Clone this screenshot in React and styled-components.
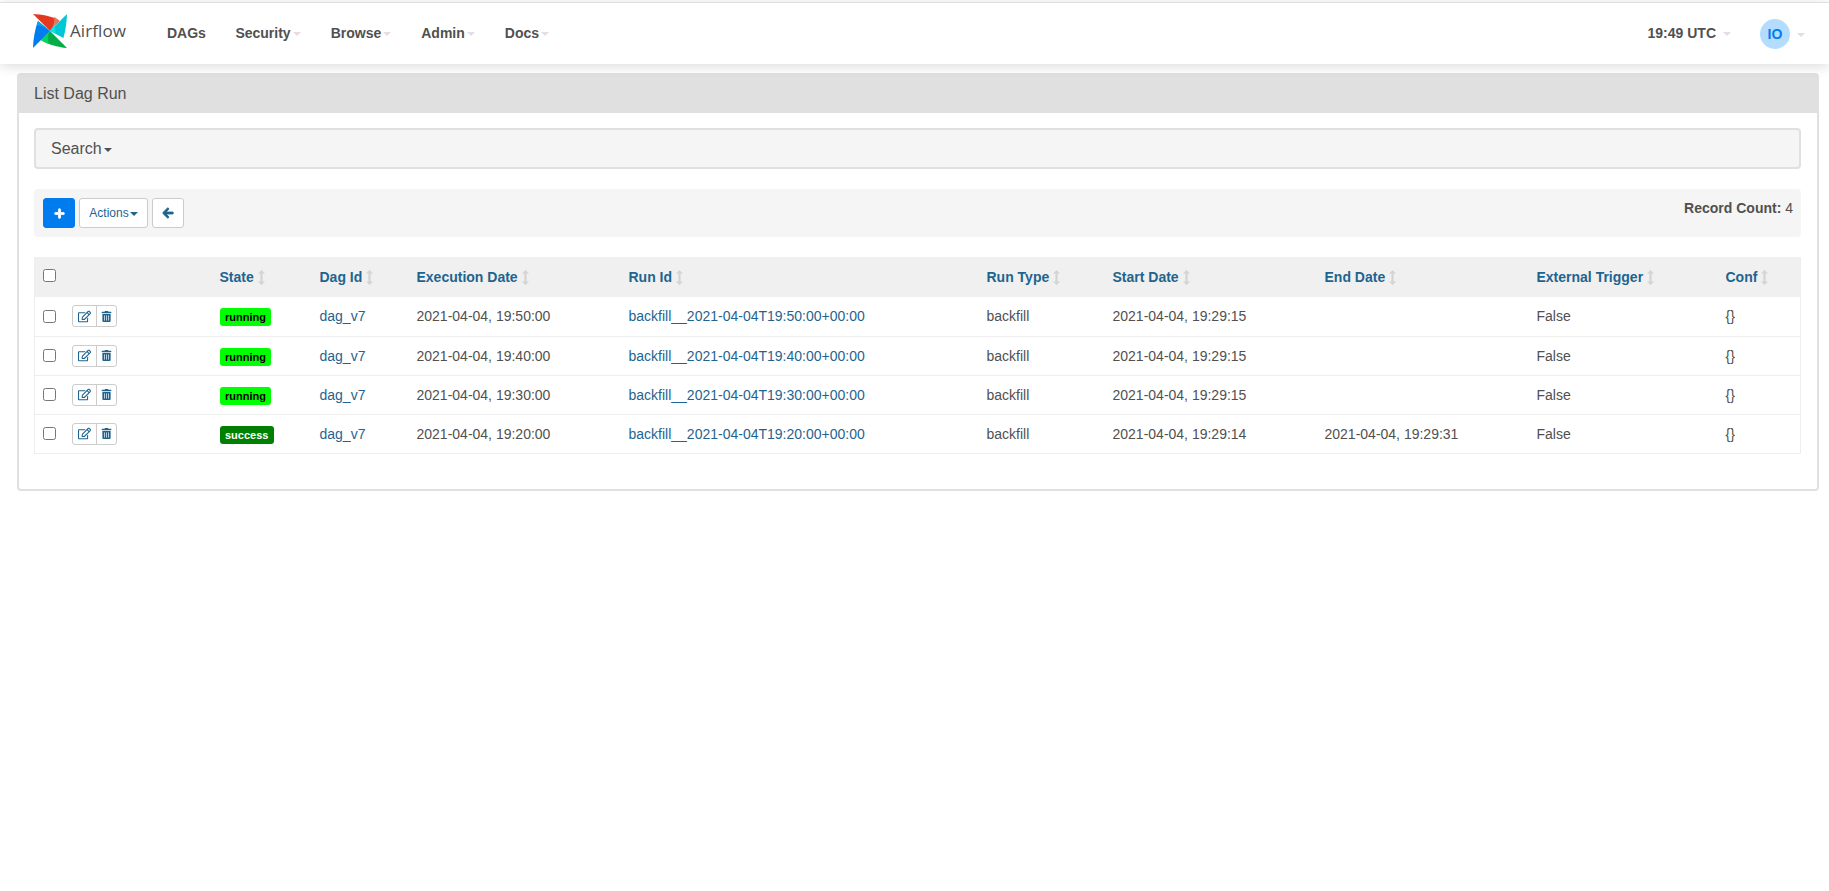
import React from "react";
import styled, { createGlobalStyle } from "styled-components";
import { FaPlus, FaArrowLeft, FaRegEdit, FaTrashAlt } from "react-icons/fa";

const LINK = "#1f648f";

const Global = createGlobalStyle`
  html, body { margin: 0; padding: 0; background: #fff; }
  body { font-family: "Liberation Sans", Arial, sans-serif; font-size: 14px; line-height: 20px; color: #51504f; }
  * { box-sizing: border-box; }
`;

const Navbar = styled.header`
  height: 62px;
  margin-top: 2px;
  border-top: 1px solid #e0e0e0;
  background: #fff;
  box-shadow: 0 2px 12px rgba(0, 0, 0, 0.15);
  display: flex;
  align-items: center;
  padding: 0 24px 0 32px;
  position: relative;
`;
const Brand = styled.a`
  display: flex;
  align-items: center;
  width: 135px;
  color: #51504f;
  font-family: "Open Sans", sans-serif;
  font-size: 17px;
  margin-top: -6px;
`;
const BrandName = styled.span`
  margin-left: 2px;
  letter-spacing: 0.1px;
`;
const Menu = styled.nav`
  display: flex;
  align-items: center;
  flex: 1;
  margin-top: -2px;
`;
const MenuItem = styled.a`
  display: flex;
  align-items: center;
  font-weight: 700;
  padding-right: ${(p) => (p.$caret ? "30px" : "29.5px")};
`;
const Caret = styled.span`
  display: inline-block;
  width: 0;
  height: 0;
  margin-left: ${(p) => p.$gap || 2}px;
  margin-top: 2px;
  border-top: 4px solid ${(p) => p.$color || "#e8dbe8"};
  border-left: 4px solid transparent;
  border-right: 4px solid transparent;
`;
const Clock = styled.span`
  display: flex;
  align-items: center;
  font-weight: 700;
  margin-right: 29px;
  margin-top: -2px;
`;
const Avatar = styled.span`
  width: 30px;
  height: 30px;
  border-radius: 50%;
  background: #b3dcff;
  color: #017cee;
  font-weight: 700;
  display: flex;
  align-items: center;
  justify-content: center;
`;
const UserMenu = styled.span`
  display: flex;
  align-items: center;
`;

const Page = styled.main`
  margin: 9px 10px 0 17px;
`;
const Panel = styled.section`
  border: 2px solid #e0e0e0;
  border-radius: 4px;
  background: #fff;
`;
const PanelHeading = styled.h1`
  margin: 0;
  height: 38px;
  background: #e0e0e0;
  padding: 9px 15px 0;
  font-size: 16px;
  line-height: 20px;
  font-weight: 400;
`;
const PanelBody = styled.div`
  padding: 15px 16px 35px 15px;
`;
const SearchBar = styled.div`
  height: 41px;
  border: 2px solid #e0e0e0;
  border-radius: 4px;
  background: #f5f5f5;
  padding: 0 15px;
  display: flex;
  align-items: center;
  font-size: 16px;
`;
const Toolbar = styled.div`
  margin-top: 20px;
  height: 48px;
  background: #f5f5f5;
  border-radius: 4px;
  padding: 9px 8px 9px 9px;
  display: flex;
  align-items: flex-start;
  gap: 4px;
`;
const Button = styled.button`
  height: 30px;
  width: ${(p) => p.$w}px;
  padding: 0;
  border-radius: 3px;
  border: 1px solid ${(p) => (p.$primary ? "#017cee" : "#ccc")};
  background: ${(p) => (p.$primary ? "#017cee" : "#fff")};
  color: ${(p) => (p.$primary ? "#fff" : LINK)};
  font: 12px "Liberation Sans", Arial, sans-serif;
  display: flex;
  align-items: center;
  justify-content: center;
  svg { stroke: currentColor; stroke-width: 40; }
`;
const RecordCount = styled.div`
  margin-left: auto;
`;
const Table = styled.table`
  margin-top: 20px;
  width: 100%;
  table-layout: fixed;
  border-collapse: collapse;
  border: 1px solid #eee;
  border-top: 0;
`;
const Th = styled.th`
  height: 40px;
  background: #f0f0f0;
  text-align: left;
  padding: 0 8px;
  color: ${LINK};
  font-weight: 700;
  white-space: nowrap;
`;
const Td = styled.td`
  height: 39px;
  padding: 0 8px;
  border-top: 1px solid #eee;
  white-space: nowrap;
`;
const Row = styled.tr`
  &:first-child td { border-top: 0; }
`;
const Link = styled.a`
  color: ${LINK};
`;
const CheckCell = styled.div`
  display: flex;
  align-items: center;
`;
const Check = styled.input.attrs({ type: "checkbox" })`
  margin: 0;
  width: 13px;
  height: 13px;
`;
const HeadCheck = styled(Check)`
  margin-top: 0;
`;
const IconGroup = styled.div`
  display: flex;
  margin-left: 16px;
  height: 22px;
  width: 45px;
  border: 1px solid #ccc;
  border-radius: 3px;
  color: ${LINK};
`;
const IconBtn = styled.span`
  width: ${(p) => p.$w}px;
  display: flex;
  align-items: center;
  justify-content: center;
  font-size: 13px;
  & + & { border-left: 1px solid #ccc; }
`;
const Label = styled.span`
  display: inline-block;
  height: 18px;
  line-height: 18px;
  padding: 0 5.5px;
  margin-top: 2px;
  border-radius: 3px;
  font-size: 11px;
  font-weight: 700;
  background: ${(p) => p.$bg};
  color: ${(p) => p.$fg};
`;
const SortSvg = styled.svg`
  margin-left: 4px;
  vertical-align: -3px;
`;
const Sort = () => (
  <SortSvg width="7" height="15" viewBox="0 0 7 15" fill="#d4d4d4">
    <path d="M3.5 0 7 3.6H4.6V11.4H7L3.5 15 0 11.4H2.4V3.6H0Z" />
  </SortSvg>
);
const Logo = () => (
  <svg width="36" height="36" viewBox="0 0 36 36">
    <path d="M1 1 L18 18 L27.5 8 C21 3 9 1.5 1 1Z" fill="#e43921" />
    <path d="M18 18 L27.5 8 C26 6 24 5 22 4 C23 9 21 14 18 18Z" fill="#f0705a" />
    <path d="M35 1 L18 18 L31.5 25 C33.5 17 34.8 9 35 1Z" fill="#00c7d4" />
    <path d="M18 18 L24 21 C22 15 23 11 27 6 Z" fill="#11e1ee" />
    <path d="M35 35 L18 18 L9 27 C15 31 26 34.5 35 35Z" fill="#00ad46" />
    <path d="M18 18 L9 27 C11 28.5 14 30 17 31 C15 26 16 22 18 18Z" fill="#04d659" />
    <path d="M1 35 L18 18 L6 8 C3 16 1.2 26 1 35Z" fill="#017cee" />
    <path d="M18 18 L6 8 C5.5 9.5 5 11 4.6 12.5 C9 12 14 14 18 18Z" fill="#00a7e1" />
  </svg>
);

const widths = [177, 100, 97, 212, 358, 126, 212, 212, 189, 0];
const heads = ["State", "Dag Id", "Execution Date", "Run Id", "Run Type", "Start Date", "End Date", "External Trigger", "Conf"];
const Col = styled.col`
  width: ${(p) => (p.$w ? `${p.$w}px` : "auto")};
`;
const rows = [
  ["running", "19:50:00", "2021-04-04, 19:29:15", ""],
  ["running", "19:40:00", "2021-04-04, 19:29:15", ""],
  ["running", "19:30:00", "2021-04-04, 19:29:15", ""],
  ["success", "19:20:00", "2021-04-04, 19:29:14", "2021-04-04, 19:29:31"],
];

export default function App() {
  return (
    <>
      <Global />
      <Navbar>
        <Brand>
          <Logo />
          <BrandName>Airflow</BrandName>
        </Brand>
        <Menu>
          <MenuItem>DAGs</MenuItem>
          {["Security", "Browse", "Admin", "Docs"].map((m) => (
            <MenuItem key={m} $caret>
              {m}
              <Caret />
            </MenuItem>
          ))}
        </Menu>
        <Clock>
          19:49 UTC
          <Caret $gap={7} />
        </Clock>
        <UserMenu>
          <Avatar>IO</Avatar>
          <Caret $gap={7} />
        </UserMenu>
      </Navbar>
      <Page>
        <Panel>
          <PanelHeading>List Dag Run</PanelHeading>
          <PanelBody>
            <SearchBar>
              Search
              <Caret $color="#51504f" $gap={2} />
            </SearchBar>
            <Toolbar>
              <Button $primary $w={32}><FaPlus size={11} /></Button>
              <Button $w={69}>Actions<Caret $color={LINK} $gap={1} /></Button>
              <Button $w={32}><FaArrowLeft size={12} /></Button>
              <RecordCount><b>Record Count:</b> 4</RecordCount>
            </Toolbar>
            <Table>
              <colgroup>
                {widths.map((w, i) => <Col key={i} $w={w} />)}
              </colgroup>
              <thead>
                <tr>
                  <Th><HeadCheck /></Th>
                  {heads.map((h) => (
                    <Th key={h}>{h}<Sort /></Th>
                  ))}
                </tr>
              </thead>
              <tbody>
                {rows.map((r) => (
                  <Row key={r[1]}>
                    <Td>
                      <CheckCell>
                        <Check />
                        <IconGroup>
                          <IconBtn $w={23}><FaRegEdit /></IconBtn>
                          <IconBtn $w={20}><FaTrashAlt size={11} /></IconBtn>
                        </IconGroup>
                      </CheckCell>
                    </Td>
                    <Td>
                      <Label $bg={r[0] === "running" ? "#00ff00" : "#008000"} $fg={r[0] === "running" ? "#000" : "#fff"}>{r[0]}</Label>
                    </Td>
                    <Td><Link>dag_v7</Link></Td>
                    <Td>2021-04-04, {r[1]}</Td>
                    <Td><Link>backfill__2021-04-04T{r[1]}+00:00</Link></Td>
                    <Td>backfill</Td>
                    <Td>{r[2]}</Td>
                    <Td>{r[3]}</Td>
                    <Td>False</Td>
                    <Td>{"{}"}</Td>
                  </Row>
                ))}
              </tbody>
            </Table>
          </PanelBody>
        </Panel>
      </Page>
    </>
  );
}
